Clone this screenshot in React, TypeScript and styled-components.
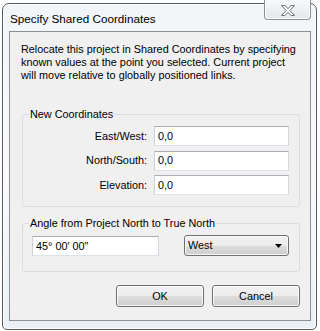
import React from "react";
import styled, { createGlobalStyle } from "styled-components";

const Global = createGlobalStyle`
  html, body { margin: 0; padding: 0; background: #ffffff; }
  body { font-family: "Liberation Sans", Arial, sans-serif; color: #000; }
  * { box-sizing: border-box; }
`;

const Window = styled.div`
  position: relative;
  margin: 3px 0 0 2px;
  width: 315px;
  height: 327px;
  border: 1px solid #54585d;
  border-radius: 7px 7px 5px 5px;
  background: linear-gradient(180deg, #f2f5f8 0%, #f8fafc 55%, #eaf1f6 100%);
  box-shadow: inset 0 0 0 1px rgba(255, 255, 255, 0.95);
  display: flex;
  flex-direction: column;
  padding: 0 5px 8px 6px;
`;

const TitleBar = styled.div`
  height: 27px;
  display: flex;
  align-items: center;
  padding-left: 1px;
`;

const Title = styled.span`
  font-size: 11.7px;
  line-height: 14px;
  margin-top: 2px;
  flex: 1;
`;

const CloseButton = styled.div`
  align-self: flex-start;
  margin-top: -5px;
  width: 47px;
  height: 21px;
  border: 1px solid #8c9095;
  border-top: none;
  border-radius: 0 0 4px 4px;
  background: linear-gradient(180deg, #f7f9fa 0%, #eef1f4 50%, #e4e8ec 100%);
  box-shadow: inset 0 -1px 0 #ffffff, inset 1px 0 0 #ffffff, inset -1px 0 0 #ffffff;
  display: flex;
  align-items: center;
  justify-content: center;
  padding-top: 2px;
`;

const Client = styled.div`
  flex: 1;
  border: 1px solid #8b9097;
  background: #f0f0f0;
  padding: 11px 10px 11px 12px;
  display: flex;
  flex-direction: column;
  font-size: 10.85px;
`;

const Description = styled.p`
  margin: 0 0 0 -1px;
  line-height: 13px;
  white-space: pre-line;
`;

const Group = styled.fieldset<{ $top: number; $bottom: number }>`
  margin: ${(p) => p.$top}px 0 0 0;
  padding: 5px 10px ${(p) => p.$bottom}px 6px;
  border: 1px solid #d5dfe5;
  border-radius: 3px;
  min-width: 0;
`;

const Legend = styled.legend`
  padding: 0 1px;
  line-height: 13px;
  font-size: 10.85px;
`;

const FieldGrid = styled.div`
  display: grid;
  grid-template-columns: 1fr 135px;
  column-gap: 7px;
  row-gap: 4.5px;
  align-items: center;
`;

const FieldLabel = styled.label`
  text-align: right;
  line-height: 13px;
`;

const TextBox = styled.div<{ $width?: number }>`
  width: ${(p) => (p.$width ? `${p.$width}px` : "auto")};
  height: 20px;
  background: #ffffff;
  border: 1px solid;
  border-color: #abadb3 #d3d6dc #dde2e8 #cfd2d8;
  padding: 0 3px;
  display: flex;
  align-items: center;
  line-height: 13px;
`;

const AngleRow = styled.div`
  display: flex;
  align-items: flex-end;
  justify-content: space-between;
  margin-left: 3px;
`;

const Combo = styled.div`
  width: 105px;
  height: 21px;
  border: 1px solid #707070;
  border-radius: 3px;
  background: linear-gradient(180deg, #f2f2f2 0%, #ebebeb 50%, #dddddd 51%, #cfcfcf 100%);
  box-shadow: inset 0 0 0 1px rgba(255, 255, 255, 0.8);
  display: flex;
  align-items: center;
  justify-content: space-between;
  padding: 0 6px 0 3px;
  line-height: 13px;
`;

const ButtonRow = styled.div`
  margin-top: 13px;
  display: flex;
  justify-content: flex-end;
  gap: 8px;
`;

const Button = styled.div`
  width: 88px;
  height: 22px;
  border: 1px solid #707070;
  border-radius: 3px;
  background: linear-gradient(180deg, #f2f2f2 0%, #ebebeb 50%, #dddddd 51%, #cfcfcf 100%);
  box-shadow: inset 0 0 0 1px rgba(255, 255, 255, 0.8);
  display: flex;
  align-items: center;
  justify-content: center;
  line-height: 13px;
`;

const CloseGlyph = () => (
  <svg width="14" height="11" viewBox="0 0 14 11">
    <polygon
      points="0.5,0.5 3.8,0.5 7,3.6 10.2,0.5 13.5,0.5 8.9,5.5 13.5,10.5 10.2,10.5 7,7.4 3.8,10.5 0.5,10.5 5.1,5.5"
      fill="#ffffff"
      stroke="#6f747a"
      strokeWidth="1"
      strokeLinejoin="round"
    />
  </svg>
);

const DownArrow = () => (
  <svg width="7" height="4" viewBox="0 0 7 4">
    <polygon points="0,0 7,0 3.5,4" fill="#000" />
  </svg>
);

export default function App() {
  return (
    <>
      <Global />
      <Window>
        <TitleBar>
          <Title>Specify Shared Coordinates</Title>
          <CloseButton>
            <CloseGlyph />
          </CloseButton>
        </TitleBar>
        <Client>
          <Description>
            {"Relocate this project in Shared Coordinates by specifying\nknown values at the point you selected. Current project\nwill move relative to globally positioned links."}
          </Description>
          <Group $top={26} $bottom={11}>
            <Legend>New Coordinates</Legend>
            <FieldGrid>
              <FieldLabel>East/West:</FieldLabel>
              <TextBox>0,0</TextBox>
              <FieldLabel>North/South:</FieldLabel>
              <TextBox>0,0</TextBox>
              <FieldLabel>Elevation:</FieldLabel>
              <TextBox>0,0</TextBox>
            </FieldGrid>
          </Group>
          <Group $top={10} $bottom={15}>
            <Legend>Angle from Project North to True North</Legend>
            <AngleRow>
              <TextBox $width={127}>45° 00' 00"</TextBox>
              <Combo>
                <span>West</span>
                <DownArrow />
              </Combo>
            </AngleRow>
          </Group>
          <ButtonRow>
            <Button>OK</Button>
            <Button>Cancel</Button>
          </ButtonRow>
        </Client>
      </Window>
    </>
  );
}
